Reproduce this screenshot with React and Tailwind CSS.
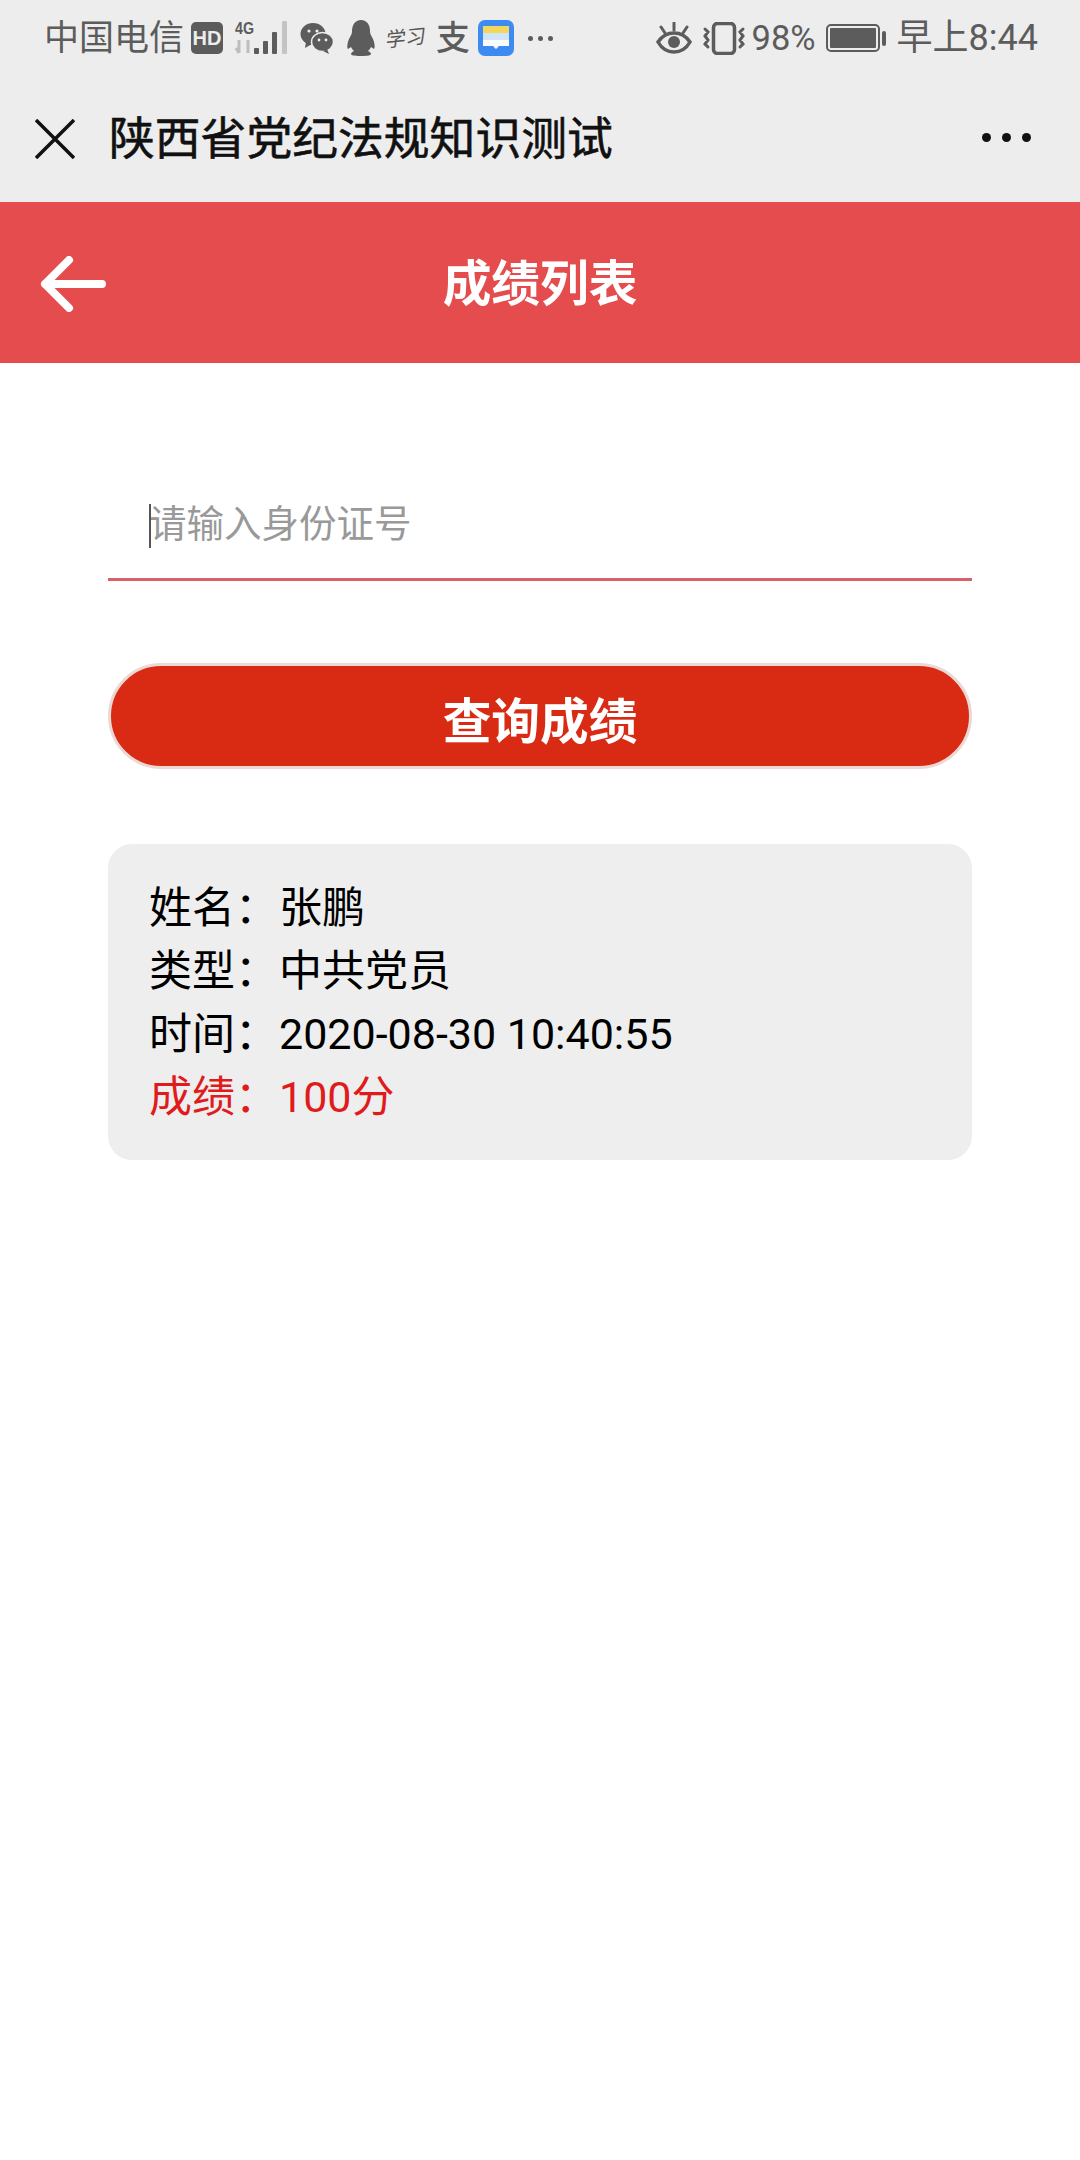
import { useState } from "react";

function StatusLeft() {
  return (
    <div className="flex items-center pl-[44px]">
      <span className="text-[35px] leading-none tracking-normal">中国电信</span>
      <div className="ml-[7px] flex h-[32px] w-[32px] items-center justify-center rounded-[5px] bg-[#5c5c5c] text-[20px] font-bold leading-none text-[#ededed] [font-family:'Liberation_Sans',sans-serif]">
        HD
      </div>
      <svg className="ml-[11px]" width="56" height="36" viewBox="0 0 56 36">
        <text x="1" y="14" fontSize="17" fontWeight="700" fill="#5c5c5c" fontFamily="Liberation Sans" textLength="19" lengthAdjust="spacingAndGlyphs">4G</text>
        <path d="M5 20v13M2 28l3 5M14 20v13" stroke="#bdbdbd" strokeWidth="3" fill="none" />
        <rect x="20" y="28" width="5" height="6" rx="1" fill="#5c5c5c" />
        <rect x="29" y="21" width="5" height="13" rx="1" fill="#5c5c5c" />
        <rect x="38" y="12" width="5" height="22" rx="1" fill="#5c5c5c" />
        <rect x="48" y="1" width="5" height="33" rx="1" fill="#c4c4c4" />
      </svg>
      <svg className="ml-[10px]" width="34" height="32" viewBox="0 0 34 32">
        <ellipse cx="13" cy="12" rx="12.5" ry="11" fill="#5c5c5c" />
        <path d="M6 20l-1 6 7-4z" fill="#5c5c5c" />
        <ellipse cx="22.5" cy="20" rx="11" ry="9.5" fill="#5c5c5c" stroke="#ededed" strokeWidth="1.5" />
        <path d="M27 27l2 5-6-3z" fill="#5c5c5c" />
        <circle cx="9" cy="9" r="1.6" fill="#ededed" />
        <circle cx="17" cy="9" r="1.6" fill="#ededed" />
        <circle cx="19" cy="18" r="1.4" fill="#ededed" />
        <circle cx="26" cy="18" r="1.4" fill="#ededed" />
      </svg>
      <svg className="ml-[12px]" width="30" height="36" viewBox="0 0 30 36">
        <path d="M15 0c6 0 9 5 9 11 0 3 1 4 3 8 2 5 2 9 1 10l-3-2c-1 2-2 3-3 4 2 1 3 2 3 3s-2 2-10 2-10-1-10-2 1-2 3-3c-1-1-2-2-3-4l-3 2c-1-1-1-5 1-10 2-4 3-5 3-8C6 5 9 0 15 0z" fill="#5c5c5c" />
      </svg>
      <span className="ml-[10px] w-[40px] -rotate-6 -skew-x-12 whitespace-nowrap text-[20px] leading-none text-[#555]">学习</span>
      <span className="ml-[10px] text-[34px] font-medium leading-none">支</span>
      <svg className="ml-[8px]" width="36" height="36" viewBox="0 0 36 36">
        <rect width="36" height="36" rx="7" fill="#3d8bf2" />
        <rect x="5" y="6" width="26" height="7" fill="#f4d65a" />
        <rect x="5" y="13" width="26" height="7" fill="#cfe6f7" />
        <path d="M5 20h26v6H21l-3 3-3-3H5z" fill="#fbfbfb" />
      </svg>
      <div className="ml-[14px] flex gap-[5px]">
        <span className="h-[5px] w-[5px] rounded-full bg-[#5c5c5c]" />
        <span className="h-[5px] w-[5px] rounded-full bg-[#5c5c5c]" />
        <span className="h-[5px] w-[5px] rounded-full bg-[#5c5c5c]" />
      </div>
    </div>
  );
}

function StatusRight() {
  return (
    <div className="flex items-center pr-[42px]">
      <svg width="36" height="32" viewBox="0 0 36 32">
        <path d="M2 20c4-6 9-9 16-9s12 3 16 9c-4 7-9 10-16 10S6 27 2 20z" fill="none" stroke="#5c5c5c" strokeWidth="3.5" />
        <circle cx="18" cy="20" r="6" fill="#5c5c5c" />
        <path d="M18 1v7M5 5l4 6M31 5l-4 6" stroke="#5c5c5c" strokeWidth="3" strokeLinecap="round" />
      </svg>
      <svg className="ml-[10px]" width="44" height="33" viewBox="0 0 44 33">
        <rect x="11.5" y="1.5" width="21" height="30" rx="4" fill="none" stroke="#5c5c5c" strokeWidth="3.5" />
        <path d="M3 7l3 3-3 4 3 4-3 4 3 3M41 7l-3 3 3 4-3 4 3 4-3 3" fill="none" stroke="#5c5c5c" strokeWidth="3" strokeLinecap="round" />
      </svg>
      <span className="ml-[6px] text-[34.5px] leading-none">98%</span>
      <svg className="ml-[10px]" width="61" height="28" viewBox="0 0 61 28">
        <rect x="1" y="1" width="52" height="26" rx="4" fill="none" stroke="#5c5c5c" strokeWidth="2" />
        <rect x="4" y="4" width="46" height="20" rx="1" fill="#5c5c5c" />
        <rect x="56" y="7" width="4" height="15" rx="2" fill="#5c5c5c" />
      </svg>
      <span className="ml-[10px] text-[36px] leading-none">早上8:44</span>
    </div>
  );
}

function Row({ label, value, red }) {
  return (
    <div className={red ? "flex text-[#e01b1b]" : "flex text-black"}>
      <span>{label}</span>
      <span className="w-[44px]">：</span>
      <span>{value}</span>
    </div>
  );
}

export default function App() {
  const [idCard, setIdCard] = useState("");

  return (
    <div className="min-h-[2160px] bg-white [font-family:Roboto,'Noto_Sans_CJK_SC',sans-serif]">
      <div className="bg-[#ededed]">
        <div className="flex h-[76px] items-center justify-between text-[#5c5c5c]">
          <StatusLeft />
          <StatusRight />
        </div>
        <div className="flex h-[126px] items-center pl-[35px] pr-[49px]">
          <svg width="40" height="40" viewBox="0 0 40 40">
            <path d="M1 1l38 38M39 1L1 39" stroke="#111" strokeWidth="3.5" />
          </svg>
          <div className="ml-[34px] flex-1 pt-[2px] text-[45.8px] font-normal leading-none text-[#111] [-webkit-text-stroke:0.6px_#111]">陕西省党纪法规知识测试</div>
          <div className="mb-[4px] flex gap-[11px]">
            <span className="h-[9px] w-[9px] rounded-full bg-[#111]" />
            <span className="h-[9px] w-[9px] rounded-full bg-[#111]" />
            <span className="h-[9px] w-[9px] rounded-full bg-[#111]" />
          </div>
        </div>
      </div>

      <div className="relative flex h-[161px] items-center justify-center bg-[#e44c4d] pt-[6px]">
        <svg className="absolute left-[40px] top-[54px]" width="66" height="56" viewBox="0 0 66 56">
          <path d="M62 28H5M29 4L5 28l24 24" fill="none" stroke="#fff" strokeWidth="8" strokeLinecap="round" strokeLinejoin="round" />
        </svg>
        <h1 className="text-[48.7px] font-bold leading-none text-white">成绩列表</h1>
      </div>

      <div className="px-[108px] pt-[106px]">
        <div className="relative">
          <input
            value={idCard}
            onChange={(e) => setIdCard(e.target.value)}
            placeholder="请输入身份证号"
            className="h-[112px] w-full border-b-[3px] border-[#d8626a] pl-[41px] text-[37.5px] text-[#333] outline-none placeholder:text-[#999]"
          />
          <span className="absolute left-[41px] top-[35px] h-[44px] w-[2px] bg-[#555]" />
        </div>

        <button className="mt-[82px] h-[106px] w-full rounded-full border-[3px] border-[#ecd8d4] bg-[#d92b13] pt-[15px] text-[48.7px] font-bold leading-none text-white">
          查询成绩
        </button>

        <div className="mt-[75px] rounded-[24px] bg-[#eeeeee] pb-[31px] pl-[41px] pr-[42px] pt-[33px] text-[43px] leading-[63px]">
          <Row label="姓名" value="张鹏" />
          <Row label="类型" value="中共党员" />
          <Row label="时间" value="2020-08-30 10:40:55" />
          <Row label="成绩" value="100分" red />
        </div>
      </div>
    </div>
  );
}
